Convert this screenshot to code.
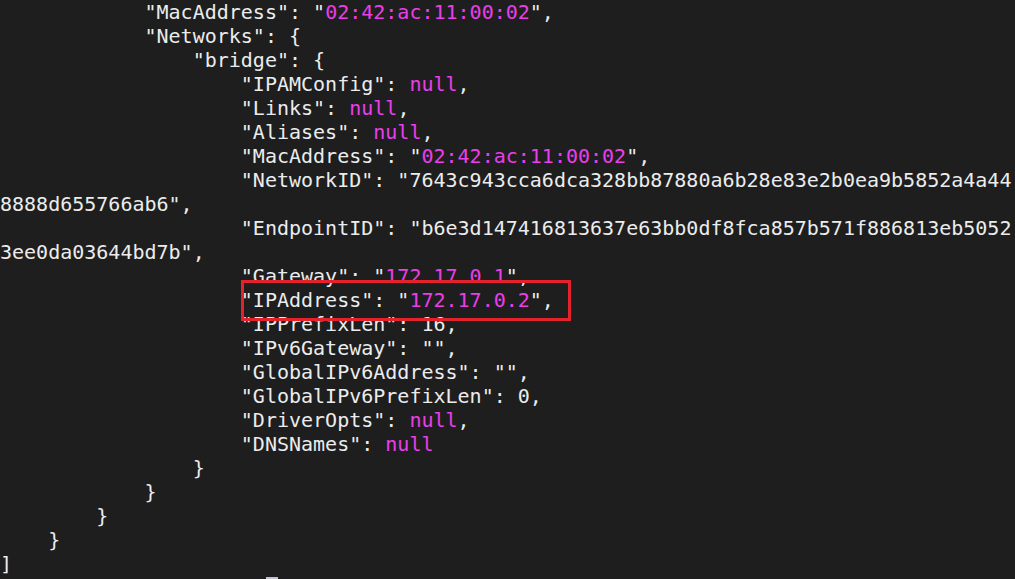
const W = "w";
const M = "m";

// each line: [indent, [[kind, text], ...]]
const lines = [
  [12, [[W, '"MacAddress": "'], [M, "02:42:ac:11:00:02"], [W, '",']]],
  [12, [[W, '"Networks": {']]],
  [16, [[W, '"bridge": {']]],
  [20, [[W, '"IPAMConfig": '], [M, "null"], [W, ","]]],
  [20, [[W, '"Links": '], [M, "null"], [W, ","]]],
  [20, [[W, '"Aliases": '], [M, "null"], [W, ","]]],
  [20, [[W, '"MacAddress": "'], [M, "02:42:ac:11:00:02"], [W, '",']]],
  [20, [[W, '"NetworkID": "7643c943cca6dca328bb87880a6b28e83e2b0ea9b5852a4a44']]],
  [0, [[W, '8888d655766ab6",']]],
  [20, [[W, '"EndpointID": "b6e3d147416813637e63bb0df8fca857b571f886813eb5052']]],
  [0, [[W, '3ee0da03644bd7b",']]],
  [20, [[W, '"Gateway": "'], [M, "172.17.0.1"], [W, '",']]],
  [20, [[W, '"IPAddress": "'], [M, "172.17.0.2"], [W, '",']]],
  [20, [[W, '"IPPrefixLen": 16,']]],
  [20, [[W, '"IPv6Gateway": "",']]],
  [20, [[W, '"GlobalIPv6Address": "",']]],
  [20, [[W, '"GlobalIPv6PrefixLen": 0,']]],
  [20, [[W, '"DriverOpts": '], [M, "null"], [W, ","]]],
  [20, [[W, '"DNSNames": '], [M, "null"]]],
  [16, [[W, "}"]]],
  [12, [[W, "}"]]],
  [8, [[W, "}"]]],
  [4, [[W, "}"]]],
  [0, [[W, "]"]]],
];

export default function App() {
  return (
    <div className="relative w-[1015px] h-[579px] overflow-hidden bg-[#1e1e1e] text-[#ececec] font-['DejaVu_Sans_Mono',monospace] text-[20px] leading-[24px]">
      <div className="whitespace-pre">
        {lines.map(([indent, segs], i) => (
          <div key={i} className="h-[24px]">
            {" ".repeat(indent)}
            {segs.map(([k, t], j) => (
              <span key={j} className={k === M ? "text-[#ea3eea]" : ""}>{t}</span>
            ))}
          </div>
        ))}
        {/* terminal cursor */}
        <div className="h-[24px] pl-[266px] pt-[1px]">
          <div className="w-[12px] h-[20px] bg-[#c4c2d4]" />
        </div>
      </div>
      {/* annotation box */}
      <div className="absolute left-[241px] top-[280px] w-[330px] h-[41px] border-[3px] border-[#e3222b]" />
    </div>
  );
}
